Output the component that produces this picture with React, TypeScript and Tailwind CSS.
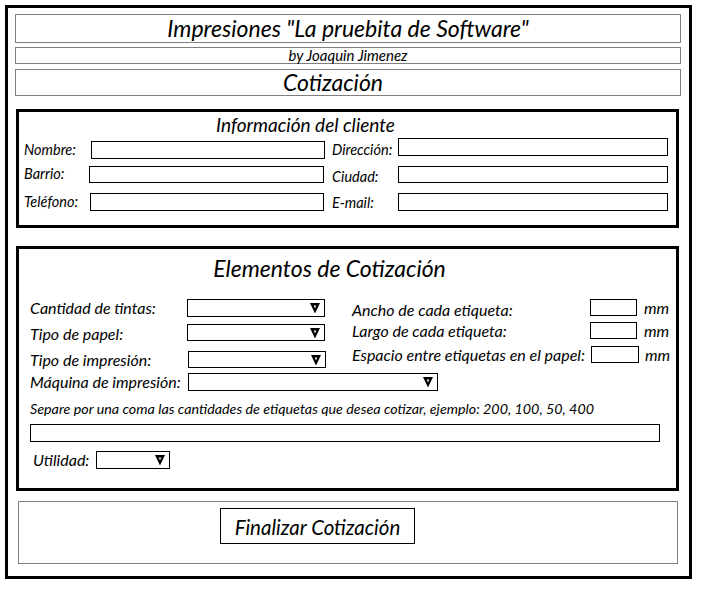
const font = "font-['Lato','Liberation_Sans',sans-serif] italic";

function Arrow() {
  return (
    <svg width="10" height="10" viewBox="0 0 10 10" className="shrink-0">
      <polygon points="0,0 10,0 5,10.5" fill="#000" />
      <polygon points="3.8,2.4 6.2,2.4 5,5.4" fill="#fff" />
    </svg>
  );
}

function Select({ w, h = 18 }: { w: number; h?: number }) {
  return (
    <div
      className="shrink-0 flex items-center justify-end pr-[4px] border border-black bg-white"
      style={{ width: w, height: h }}
    >
      <Arrow />
    </div>
  );
}

function Box({ w, h = 18 }: { w: number; h?: number }) {
  return <div className="shrink-0 border border-black bg-white" style={{ width: w, height: h }} />;
}

function Label({ w, children, className = '' }: { w: number; children: React.ReactNode; className?: string }) {
  return (
    <span className={`shrink-0 whitespace-nowrap leading-none ${className}`} style={{ width: w }}>
      {children}
    </span>
  );
}

export default function App() {
  return (
    <div className={`${font} text-black bg-white w-[704px] h-[600px] pt-[5px] pl-[5px]`}>
      <div className="w-[687px] h-[574px] border-[3px] border-black flex flex-col">
        {/* encabezado */}
        <div className="ml-[7px] mt-[6px] w-[666px] h-[29px] border border-[#7f7f7f] flex items-center justify-center text-[23px] leading-none">
          Impresiones "La pruebita de Software"
        </div>
        <div className="ml-[7px] mt-[4px] w-[666px] h-[17px] border border-[#7f7f7f] flex items-center justify-center text-[15px] leading-none">
          by Joaquin Jimenez
        </div>
        <div className="ml-[7px] mt-[5px] w-[666px] h-[27px] border border-[#7f7f7f] flex items-center justify-center pr-[30px] text-[23px] leading-none">
          Cotización
        </div>

        {/* Información del cliente */}
        <div className="ml-[8px] mt-[13px] w-[663px] h-[119px] border-[3px] border-black flex flex-col text-[14.5px]">
          <div className="h-[24px] pr-[84px] flex items-center justify-center text-[19px] leading-none">
            Información del cliente
          </div>
          <div className="flex pl-[5px]">
            <div className="flex flex-col">
              <div className="flex items-center h-[18px] mt-[5px]">
                <Label w={67}>Nombre:</Label>
                <Box w={234} />
              </div>
              <div className="flex items-center h-[17px] mt-[7px]">
                <Label w={65}>Barrio:</Label>
                <Box w={235} h={17} />
              </div>
              <div className="flex items-center h-[18px] mt-[10px]">
                <Label w={66}>Teléfono:</Label>
                <Box w={234} />
              </div>
            </div>
            <div className="flex flex-col ml-[7px]">
              <div className="flex items-center h-[18px] mt-[2px]">
                <Label w={66} className="pt-[6px]">Dirección:</Label>
                <Box w={270} />
              </div>
              <div className="flex items-center h-[17px] mt-[10px]">
                <Label w={66} className="pt-[5px]">Ciudad:</Label>
                <Box w={270} h={17} />
              </div>
              <div className="flex items-center h-[18px] mt-[10px]">
                <Label w={66} className="pt-[3px]">E-mail:</Label>
                <Box w={270} />
              </div>
            </div>
          </div>
        </div>

        {/* Elementos de Cotización */}
        <div className="ml-[8px] mt-[18px] w-[663px] h-[245px] border-[3px] border-black flex flex-col text-[16px]">
          <div className="h-[38px] pr-[36px] flex items-center justify-center text-[23px] leading-none">
            Elementos de Cotización
          </div>
          <div className="flex pl-[11px] mt-[12px]">
            <div className="flex flex-col">
              <div className="flex items-center h-[18px]">
                <Label w={157}>Cantidad de tintas:</Label>
                <Select w={138} />
              </div>
              <div className="flex items-center h-[17px] mt-[7px]">
                <Label w={157} className="pt-[2px]">Tipo de papel:</Label>
                <Select w={138} h={17} />
              </div>
              <div className="flex items-center h-[17px] mt-[10px]">
                <Label w={158}>Tipo de impresión:</Label>
                <Select w={138} h={17} />
              </div>
            </div>
            <div className="flex flex-col ml-[26px]">
              <div className="flex items-center h-[17px]">
                <Label w={238} className="pt-[5px]">Ancho de cada etiqueta:</Label>
                <Box w={47} h={17} />
                <span className="ml-[7px] leading-none">mm</span>
              </div>
              <div className="flex items-center h-[17px] mt-[6px]">
                <Label w={238}>Largo de cada etiqueta:</Label>
                <Box w={47} h={17} />
                <span className="ml-[7px] leading-none">mm</span>
              </div>
              <div className="flex items-center h-[17px] mt-[7px]">
                <Label w={239}>Espacio entre etiquetas en el papel:</Label>
                <Box w={48} h={17} />
                <span className="ml-[6px] leading-none">mm</span>
              </div>
            </div>
          </div>
          <div className="flex items-center h-[18px] pl-[11px] mt-[5px]">
            <Label w={158}>Máquina de impresión:</Label>
            <Select w={250} />
          </div>
          <div className="pl-[11px] mt-[10px] h-[16px] text-[14.3px] leading-[16px] whitespace-nowrap">
            Separe por una coma las cantidades de etiquetas que desea cotizar, ejemplo: 200, 100, 50, 400
          </div>
          <div className="ml-[11px] mt-[7px]">
            <Box w={630} />
          </div>
          <div className="flex items-center h-[18px] pl-[14px] mt-[9px]">
            <Label w={63}>Utilidad:</Label>
            <Select w={74} />
          </div>
        </div>

        {/* Botón */}
        <div className="ml-[10px] mt-[10px] w-[660px] h-[63px] border border-[#7f7f7f] flex items-start pt-[6px] pl-[201px]">
          <button className="w-[195px] h-[36px] border border-black bg-white flex items-center justify-center pt-[3px] text-[20.5px] leading-none italic">
            Finalizar Cotización
          </button>
        </div>
      </div>
    </div>
  );
}
